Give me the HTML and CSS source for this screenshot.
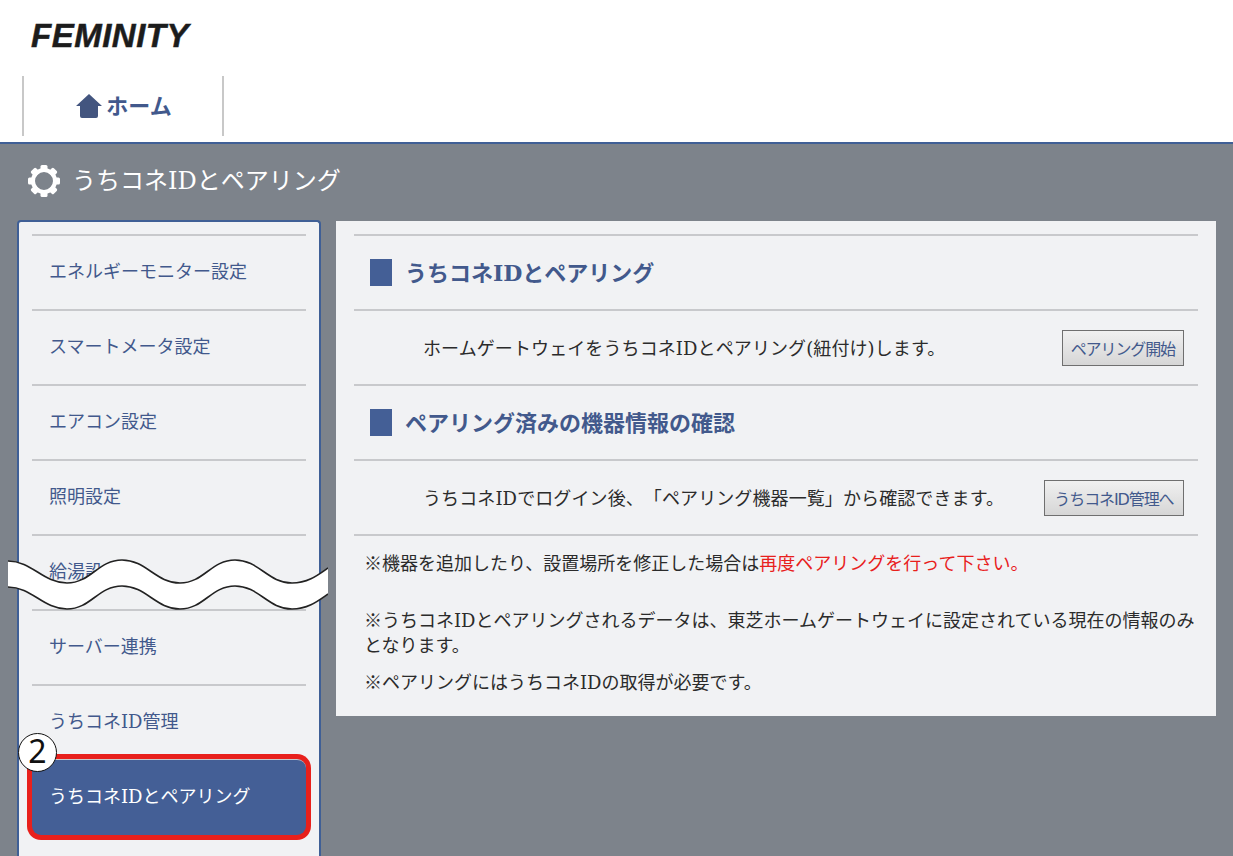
FILE: index.html
```html
<!DOCTYPE html>
<html lang="ja">
<head>
    <meta charset="UTF-8">
    <title>うちコネIDとペアリング</title>
    <link rel="stylesheet" href="styles.css">
</head>
<body>

<header class="site-header">
    <div class="logo">FEMINITY</div>
    <nav class="top-nav">
        <a class="home-tab" href="#">
            <svg class="home-icon" viewBox="0 0 26 24" width="26" height="24">
                <path d="M13 0 L26 12 H22 V22 Q22 24 20 24 H6 Q4 24 4 22 V12 H0 Z" fill="#43557f"/>
            </svg>
            <span>ホーム</span>
        </a>
    </nav>
</header>

<div class="page-title">
    <svg class="gear-icon" viewBox="0 0 32 32" width="32" height="32">
        <g fill="#fff">
            <rect x="12.5" y="0" width="7" height="7" rx="1.5"/>
            <rect x="12.5" y="0" width="7" height="7" rx="1.5" transform="rotate(45 16 16)"/>
            <rect x="12.5" y="0" width="7" height="7" rx="1.5" transform="rotate(90 16 16)"/>
            <rect x="12.5" y="0" width="7" height="7" rx="1.5" transform="rotate(135 16 16)"/>
            <rect x="12.5" y="0" width="7" height="7" rx="1.5" transform="rotate(180 16 16)"/>
            <rect x="12.5" y="0" width="7" height="7" rx="1.5" transform="rotate(225 16 16)"/>
            <rect x="12.5" y="0" width="7" height="7" rx="1.5" transform="rotate(270 16 16)"/>
            <rect x="12.5" y="0" width="7" height="7" rx="1.5" transform="rotate(315 16 16)"/>
        </g>
        <circle cx="16" cy="16" r="11" fill="none" stroke="#fff" stroke-width="4"/>
    </svg>
    <h1>うちコネIDとペアリング</h1>
</div>

<div class="content">
    <aside class="sidebar">
        <ul class="side-menu">
            <li>エネルギーモニター設定</li>
            <li>スマートメータ設定</li>
            <li>エアコン設定</li>
            <li>照明設定</li>
            <li>給湯設定</li>
            <li>サーバー連携</li>
            <li>うちコネID管理</li>
            <li class="active">うちコネIDとペアリング</li>
        </ul>
        <div class="step-badge">2</div>
    </aside>

    <main class="panel">
        <div class="row heading-row"><h2>うちコネIDとペアリング</h2></div>
        <div class="row action-row">
            <p>ホームゲートウェイをうちコネIDとペアリング(紐付け)します。</p>
            <button type="button">ペアリング開始</button>
        </div>
        <div class="row heading-row"><h2>ペアリング済みの機器情報の確認</h2></div>
        <div class="row action-row">
            <p>うちコネIDでログイン後、「ペアリング機器一覧」から確認できます。</p>
            <button type="button" class="btn-wide">うちコネID管理へ</button>
        </div>
        <div class="notes">
            <p class="note-first"><span class="mark">※</span>機器を追加したり、設置場所を修正した場合は<span class="red">再度ペアリングを行って下さい。</span></p>
            <p class="note-second"><span class="mark">※</span>うちコネIDとペアリングされるデータは、東芝ホームゲートウェイに設定されている現在の情報のみとなります。</p>
            <p class="note-third"><span class="mark">※</span>ペアリングにはうちコネIDの取得が必要です。</p>
        </div>
    </main>
</div>

<!-- page break mark drawn across the sidebar -->
<svg class="wave" viewBox="0 0 320 54" width="320" height="54">
    <path d="M0 3 C24 3 35 25 59 25 C83 25 90 2 114 2 C138 2 148 25 172 25 C196 25 203 2 227 2 C251 2 260 25 284 25 C300 25 310 17 320 10 V36 C310 43 300 51 284 51 C260 51 251 28 227 28 C203 28 196 51 172 51 C148 51 138 28 114 28 C90 28 83 51 59 51 C35 51 24 29 0 29 Z" fill="#fff"/>
    <path d="M0 3 C24 3 35 25 59 25 C83 25 90 2 114 2 C138 2 148 25 172 25 C196 25 203 2 227 2 C251 2 260 25 284 25 C300 25 310 17 320 10" fill="none" stroke="#222" stroke-width="1.6"/>
    <path d="M0 29 C24 29 35 51 59 51 C83 51 90 28 114 28 C138 28 148 51 172 51 C196 51 203 28 227 28 C251 28 260 51 284 51 C300 51 310 43 320 36" fill="none" stroke="#222" stroke-width="1.6"/>
</svg>

</body>
</html>
```

FILE: styles.css
```css
/* Base */
html, body {
    height: 856px;
    margin: 0;
    overflow: hidden;
}

body {
    position: relative;
    background: #7d838b;
    font-family: "DejaVu Serif", "Noto Sans CJK JP", sans-serif;
    text-spacing-trim: space-all;
    color: #2b2b2b;
}

/* Header */
.site-header {
    height: 142px;
    background: #fff;
    border-bottom: 2px solid #3f5f96;
    padding-left: 22px;
}

.logo {
    height: 76px;
    padding: 17px 0 0 9px;
    box-sizing: border-box;
    font-family: "Liberation Sans", sans-serif;
    font-size: 33px;
    line-height: 38px;
    font-weight: bold;
    font-style: italic;
    letter-spacing: 0.5px;
    -webkit-text-stroke: 0.5px #1c1c1c;
    color: #1c1c1c;
}

.top-nav {
    display: flex;
}

.home-tab {
    display: flex;
    align-items: center;
    justify-content: center;
    gap: 4px;
    width: 198px;
    height: 60px;
    border-left: 2px solid #c8c8c8;
    border-right: 2px solid #c8c8c8;
    color: #42598c;
    font-size: 22px;
    font-weight: bold;
    text-decoration: none;
}

.home-tab span {
    line-height: 26px;
    margin-bottom: 1px;
}

.home-icon {
    margin-left: 2px;
}

/* Page title */
.page-title {
    display: flex;
    align-items: center;
    gap: 12px;
    height: 76px;
    padding: 0 0 2px 28px;
    box-sizing: border-box;
}

.page-title h1 {
    margin: 0;
    color: #fff;
    font-size: 24px;
    line-height: 30px;
    font-weight: normal;
}

/* Two columns */
.content {
    display: flex;
    align-items: flex-start;
    gap: 15px;
    padding-left: 17px;
}

/* Sidebar */
.sidebar {
    position: relative;
    width: 304px;
    height: 636px;
    box-sizing: border-box;
    background: #f1f2f4;
    border: 2px solid #3f5f96;
    border-bottom: 0;
    border-radius: 4px 4px 0 0;
    padding: 12px 13px 0;
}

.side-menu {
    list-style: none;
    margin: 0;
    padding: 0;
}

.side-menu li {
    height: 75px;
    box-sizing: border-box;
    border-top: 2px solid #c8c9cc;
    padding-left: 17px;
    font-size: 18px;
    line-height: 71px;
    color: #42598c;
}

.side-menu li.active {
    height: 76px;
    border-top: 1px solid #c8c9cc;
    line-height: 73px;
    background: #445f96;
    color: #fff;
    border-radius: 9px;
    box-shadow: 0 0 0 5px #e8201c;
}

.step-badge {
    position: absolute;
    left: -1px;
    top: 511px;
    width: 39px;
    height: 39px;
    box-sizing: border-box;
    border: 1.5px solid #111;
    border-radius: 50%;
    background: #fff;
    color: #111;
    font-family: "Noto Sans", sans-serif;
    font-size: 32px;
    line-height: 34px;
    text-align: center;
}

/* Main panel */
.panel {
    width: 880px;
    height: 495px;
    margin-top: 1px;
    box-sizing: border-box;
    background: #f1f2f4;
    padding: 13px 18px 0;
}

.row {
    height: 75px;
    box-sizing: border-box;
    border-top: 2px solid #c8c9cc;
}

.heading-row {
    display: flex;
    align-items: center;
    padding-left: 16px;
}

.heading-row h2 {
    display: flex;
    align-items: center;
    gap: 13px;
    margin: 0;
    font-size: 22px;
    line-height: 28px;
    font-weight: bold;
    color: #42598c;
}

.heading-row h2::before {
    content: "";
    width: 22px;
    height: 27px;
    background: #445f96;
}

.action-row {
    display: flex;
    align-items: center;
    justify-content: space-between;
    padding: 0 14px 0 69px;
}

.action-row p {
    margin: 0;
    padding-top: 3px;
    font-size: 18px;
    line-height: 28px;
    letter-spacing: 0.1px;
}

button {
    height: 36px;
    padding: 0 8px;
    border: 1px solid #6f6f6f;
    background: linear-gradient(#f0f0f0, #d6d6d6);
    color: #42598c;
    font-family: "DejaVu Sans", "Noto Sans CJK JP", sans-serif;
    font-size: 16px;
    letter-spacing: -1.1px;
}

.btn-wide {
    padding: 0 9.5px;
}

/* Notes */
.notes {
    border-top: 2px solid #c8c9cc;
    padding: 0 0 0 10px;
    font-size: 18px;
    line-height: 25px;
}

.notes p {
    margin: 0;
}

.note-first {
    padding-top: 14px;
}

.note-second {
    padding-top: 31px;
}

.note-third {
    padding-top: 11px;
}

.mark {
    font-family: "Noto Sans CJK JP", sans-serif;
}

.red {
    color: #e8201c;
}

/* Wave overlay */
.wave {
    position: absolute;
    left: 8px;
    top: 558px;
}
```
